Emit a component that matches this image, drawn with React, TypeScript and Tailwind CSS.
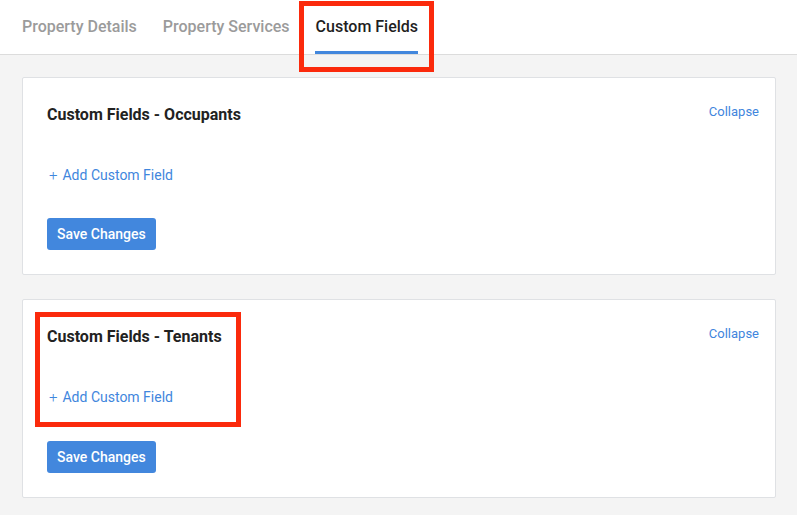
import React from 'react';

const tabs = ['Property Details', 'Property Services', 'Custom Fields'];

const FieldCard: React.FC<{ title: string; extra?: boolean }> = ({ title, extra }) => (
  <div className="bg-white border border-[#dfe1e4] rounded-[2px] pt-[27px] pl-6 pr-4 pb-6">
    <div className="flex justify-between items-start">
      <h3 className="text-[16px] leading-5 font-bold text-[#222]">{title}</h3>
      <button className="text-[13px] leading-[18px] -mt-[2px] text-[#3f86dd]">Collapse</button>
    </div>
    <button className="mt-10 ml-[2px] flex items-center gap-[5px] text-[14px] leading-5 text-[#3f86dd]">
      <span className="text-[15px] font-light">+</span>
      Add Custom Field
    </button>
    <button className={`${extra ? 'mt-[34px]' : 'mt-[33px]'} h-8 px-[10px] rounded-[3px] bg-[#4287dd] text-white text-[14px] font-medium`}>
      Save Changes
    </button>
  </div>
);

export default function App() {
  const active = 'Custom Fields';
  return (
    <div className="relative min-h-screen bg-[#f4f4f4] font-['Roboto','Liberation_Sans',sans-serif]">
      {/* Tabs */}
      <div className="h-[55px] bg-white border-b border-[#dcdcdc] flex pl-[22px] gap-[26px]">
        {tabs.map(t => (
          <div key={t} className="relative h-full flex items-center">
            <span className={`text-[16px] font-medium ${t === active ? 'text-[#1f1f1f]' : 'text-[#9b9b9b]'}`}>{t}</span>
            {t === active && <div className="absolute left-[-1px] right-0 bottom-0 h-[3px] bg-[#4287dd]" />}
          </div>
        ))}
      </div>

      {/* Cards */}
      <div className="pl-[22px] pr-[21px] pt-[22px] flex flex-col gap-6">
        <FieldCard title="Custom Fields - Occupants" />
        <FieldCard title="Custom Fields - Tenants" extra />
      </div>

      {/* Annotation boxes */}
      <div className="absolute left-[299px] top-[1px] w-[135px] h-[71px] border-[5px] border-[#fb2a0c] pointer-events-none" />
      <div className="absolute left-[35px] top-[312px] w-[206px] h-[115px] border-[5px] border-[#fb2a0c] pointer-events-none" />
    </div>
  );
}
